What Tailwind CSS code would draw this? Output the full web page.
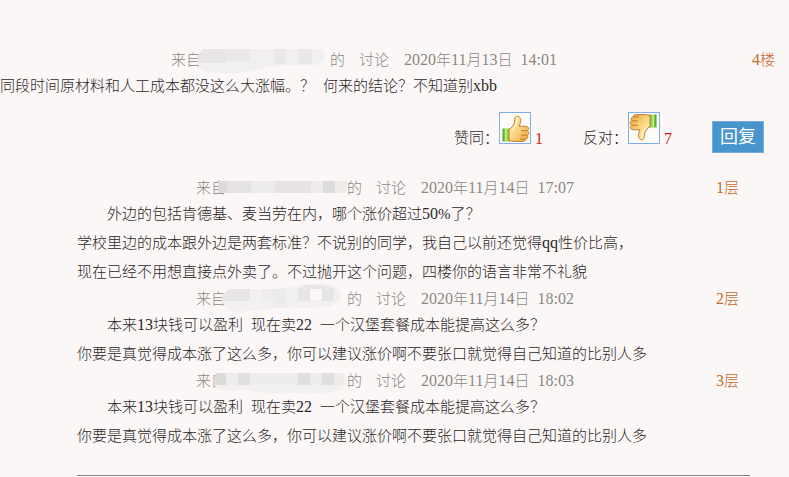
<!DOCTYPE html>
<html lang="zh-CN">
<head>
<meta charset="utf-8">
<meta name="viewport" content="width=device-width, initial-scale=1">
<title>讨论</title>
<script src="https://cdn.jsdelivr.net/npm/@tailwindcss/browser@4"></script>
</head>
<body class="min-h-screen bg-[#fbf7f6] font-['Liberation_Serif','Noto_Sans_CJK_SC',serif] text-[15px] leading-[29px] font-light text-[#2b2727]">
<svg class="absolute size-0" aria-hidden="true">
  <defs>
    <linearGradient id="skin" x1="0" y1="0" x2="1" y2="1"><stop offset="0" stop-color="#fff0bd"/><stop offset=".5" stop-color="#fbd582"/><stop offset="1" stop-color="#e9a03c"/></linearGradient>
    <linearGradient id="cuff" x1="0" y1="0" x2="1" y2="0"><stop offset="0" stop-color="#4d9f1c"/><stop offset=".5" stop-color="#a5e05f"/><stop offset="1" stop-color="#5fb024"/></linearGradient>
    <symbol id="thumb" viewBox="0 0 30 30">
      <rect x="2.500" y="15.500" width="8" height="13" fill="url(#cuff)"/>
      <path d="M5.500 16v12" stroke="#c9f08e" stroke-width="1"/>
      <path d="M9 16.500C12 15 13.500 12 14.600 9L15 5C15.300 2.500 19.500 2.400 20.300 5.500C21 8.500 20 11 19.300 13.300H26C29 13.500 29.300 16.500 27.600 17.600C29.500 19 29.200 21.500 27.200 22.300C28.500 24 27.500 26 25.600 26.300C25.300 28.200 24 28.500 22 28.500H14C12 28.500 11 27.500 9 27.500Z" fill="url(#skin)" stroke="#c08230" stroke-width="1"/>
      <path d="M21.500 17.700H27M21.500 22.200H26.500M20.500 26.200H25" fill="none" stroke="#c17b24" stroke-width="1" stroke-linecap="round"/>
      <path d="M17 5.500L16.300 10.500L12.500 17" fill="none" stroke="#fff6d0" stroke-width="1.400" stroke-linecap="round"/>
    </symbol>
  </defs>
</svg>
<main class="pt-12">
  <article>
    <header class="flex h-6 items-center pr-[14px] pl-[171px] text-[#8b8785]">
      <span>来自</span>
      <span class="relative h-6 w-[129px]">
        <svg class="absolute -left-1 top-0" width="130" height="26" role="img" aria-label="用户名已隐藏">
          <path d="M7 1H127Q130 12 119 17H98Q78 17 62 21Q40 28 10 24Q-2 20 1 9Q2 4 7 1Z" fill="#f1efef"/>
          <path d="M6 1H28V15H0Q1 5 6 1Z" fill="#e7e5e5"/><path d="M28 1H53V13H28ZM77 1H89V16H77ZM101 1H115V16H101Z" fill="#eae8e8"/>
        </svg>
      </span>
      <span class="mr-[14px]">的</span>
      <a href="#" class="mr-[15px]">讨论</a>
      <time datetime="2020-11-13T14:01"><span class="text-base">2020</span>年<span class="text-base">11</span>月<span class="text-base">13</span>日<span class="ml-2 text-base">14:01</span></time>
      <span class="ml-auto text-[#c46a2c]"><span class="text-base">4</span>楼</span>
    </header>
    <p>同段时间原材料和人工成本都没这么大涨幅。？<span class="ml-2">何来的结论？不知道别<span class="text-base">xbb</span></span></p>
    <div class="flex items-end justify-end pt-[11px] pr-[25px] pb-[23px]">
      <span>赞同：</span>
      <button type="button" aria-label="赞同" class="mb-[9px] size-8 border border-[#7faee8] bg-[#fefcfa]"><svg class="size-[30px]"><use href="#thumb"/></svg></button>
      <span class="ml-1 mr-10 text-base leading-[29px] text-[#c82020]">1</span>
      <span>反对：</span>
      <button type="button" aria-label="反对" class="mb-[9px] size-8 border border-[#7faee8] bg-[#fefcfa]"><svg class="size-[30px] rotate-180"><use href="#thumb"/></svg></button>
      <span class="ml-1 mr-10 text-base leading-[29px] text-[#c82020]">7</span>
      <button type="button" class="h-8 w-[52px] border border-[#78abdf] bg-[#4795cc] text-lg leading-7 font-normal text-white">回复</button>
    </div>
  </article>
  <section class="mr-[39px] ml-[77px] border-b border-[#858282] pb-6">
    <article>
      <header class="flex h-6 items-center pr-[11px] pl-[119px] text-[#8b8785]">
        <span>来自</span>
        <span class="relative h-6 w-[121px]">
          <svg class="absolute -left-2 top-[5px]" width="129" height="13" role="img" aria-label="用户名已隐藏">
            <path d="M0 0H129V12H0Z" fill="#eeebeb"/><path d="M0 0H9V12H0Z" fill="#dcdada"/><path d="M21 0H33V12H21Z" fill="#e2e3e2"/><path d="M9 0H21V12H9ZM57 0H93V12H57Z" fill="#e7e3e3"/><path d="M105 0H117V12H105Z" fill="#dddbdb"/>
          </svg>
        </span>
        <span class="mr-[14px]">的</span>
        <a href="#" class="mr-[15px]">讨论</a>
        <time datetime="2020-11-14T17:07"><span class="text-base">2020</span>年<span class="text-base">11</span>月<span class="text-base">14</span>日<span class="ml-2 text-base">17:07</span></time>
        <span class="ml-auto text-[#c46a2c]"><span class="text-base">1</span>层</span>
      </header>
      <p class="indent-[30px]">外边的包括肯德基、麦当劳在内，哪个涨价超过<span class="text-base">50</span>%了？</p>
      <p>学校里边的成本跟外边是两套标准？不说别的同学，我自己以前还觉得<span class="text-base">qq</span>性价比高，</p>
      <p>现在已经不用想直接点外卖了。不过抛开这个问题，四楼你的语言非常不礼貌</p>
    </article>
    <article>
      <header class="flex h-6 items-center pr-[11px] pl-[119px] text-[#8b8785]">
        <span>来自</span>
        <span class="relative h-6 w-[121px]">
          <svg class="absolute -left-1 -top-1" width="120" height="29" role="img" aria-label="用户名已隐藏">
            <path d="M9 6H55Q78 1 101 0Q116 2 119 12Q117 23 102 24Q80 26 59 25L13 29Q0 26 0 14Q2 7 9 6Z" fill="#f2f0f0"/><path d="M9 6H28V18H0Q1 8 9 6ZM76 6L84 2H100L112 6V18H99V6H88V18H76Z" fill="#e7e5e5"/><path d="M40 6H64V25H52V17H40Z" fill="#eeebeb"/><path d="M88 6H100V17H88Z" fill="#fbf7f6"/>
          </svg>
        </span>
        <span class="mr-[14px]">的</span>
        <a href="#" class="mr-[15px]">讨论</a>
        <time datetime="2020-11-14T18:02"><span class="text-base">2020</span>年<span class="text-base">11</span>月<span class="text-base">14</span>日<span class="ml-2 text-base">18:02</span></time>
        <span class="ml-auto text-[#c46a2c]"><span class="text-base">2</span>层</span>
      </header>
      <p class="indent-[30px]">本来<span class="text-base">13</span>块钱可以盈利<span class="ml-2">现在卖<span class="text-base">22</span></span><span class="ml-2">一个汉堡套餐成本能提高这么多？</span></p>
      <p>你要是真觉得成本涨了这么多，你可以建议涨价啊不要张口就觉得自己知道的比别人多</p>
    </article>
    <article>
      <header class="flex h-6 items-center pr-[11px] pl-[119px] text-[#8b8785]">
        <span>来自</span>
        <span class="relative h-6 w-[121px]">
          <svg class="absolute -left-3 top-1" width="134" height="22" role="img" aria-label="用户名已隐藏">
            <path d="M2 0H130Q136 9 127 17Q110 22 80 20Q50 22 32 17L10 18Q0 17 0 9Z" fill="#f3f1f0"/><path d="M2 0H130V12H0Z" fill="#eeecec"/><path d="M2 0H12V12H0Z" fill="#dcdbdb"/><path d="M24 0H36V12H24ZM84 0H96V12H84ZM108 0H120V12H108Z" fill="#e0dede"/>
          </svg>
        </span>
        <span class="mr-[14px]">的</span>
        <a href="#" class="mr-[15px]">讨论</a>
        <time datetime="2020-11-14T18:03"><span class="text-base">2020</span>年<span class="text-base">11</span>月<span class="text-base">14</span>日<span class="ml-2 text-base">18:03</span></time>
        <span class="ml-auto text-[#c46a2c]"><span class="text-base">3</span>层</span>
      </header>
      <p class="indent-[30px]">本来<span class="text-base">13</span>块钱可以盈利<span class="ml-2">现在卖<span class="text-base">22</span></span><span class="ml-2">一个汉堡套餐成本能提高这么多？</span></p>
      <p>你要是真觉得成本涨了这么多，你可以建议涨价啊不要张口就觉得自己知道的比别人多</p>
    </article>
  </section>
</main>
</body>
</html>
